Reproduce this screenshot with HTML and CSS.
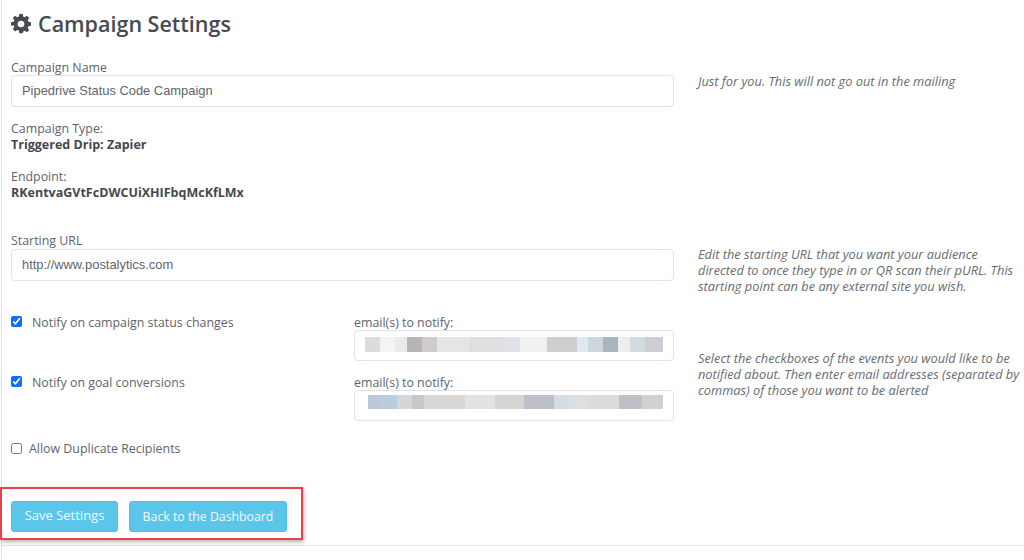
FILE: index.html
```html
<!DOCTYPE html>
<html lang="en">
<head>
<meta charset="utf-8">
<title>Campaign Settings</title>
<link rel="stylesheet" href="styles.css">
</head>
<body>
<main class="page">
  <h1 class="title">
    <svg class="gear" viewBox="0 0 24 24" aria-hidden="true"><path fill-rule="evenodd" d="M10 1h4l.6 3.1 1.9.8L19.100 3.100 21.900 5.900 20.100 8.500l.8 1.900L24 11v4l-3.100.6-.8 1.900 1.800 2.600-2.800 2.800-2.600-1.800-1.900.8L14 24h-4l-.6-3.100-1.900-.8-2.600 1.800-2.800-2.800 1.800-2.600-.8-1.900L0 15v-4l3.100-.6.800-1.900L2.100 5.900 4.900 3.100 7.500 4.900l1.900-.8zM12 9a4 4 0 1 0 0 8 4 4 0 0 0 0-8z" transform="translate(0 -1)"/></svg>
    Campaign Settings
  </h1>

  <section class="row row-name">
    <div class="main">
      <label class="label">Campaign Name</label>
      <input class="field" type="text" value="Pipedrive Status Code Campaign">
    </div>
    <p class="note">Just for you. This will not go out in the mailing</p>
  </section>

  <section class="info">
    <div class="label">Campaign Type:</div>
    <div class="value">Triggered Drip: Zapier</div>
  </section>
  <section class="info">
    <div class="label">Endpoint:</div>
    <div class="value">RKentvaGVtFcDWCUiXHIFbqMcKfLMx</div>
  </section>

  <section class="row row-url">
    <div class="main">
      <label class="label">Starting URL</label>
      <input class="field" type="text" value="http://www.postalytics.com">
    </div>
    <p class="note">Edit the starting URL that you want your audience directed to once they type in or QR scan their pURL. This starting point can be any external site you wish.</p>
  </section>

  <section class="row row-notify">
    <div class="main notify-list">
      <div class="notify">
        <label class="check"><input type="checkbox" checked><span>Notify on campaign status changes</span></label>
        <div class="email">
          <div class="label">email(s) to notify:</div>
          <div class="field masked"><span class="blur blur-a"></span></div>
        </div>
      </div>
      <div class="notify">
        <label class="check"><input type="checkbox" checked><span>Notify on goal conversions</span></label>
        <div class="email">
          <div class="label">email(s) to notify:</div>
          <div class="field masked"><span class="blur blur-b"></span></div>
        </div>
      </div>
    </div>
    <p class="note note-notify">Select the checkboxes of the events you would like to be notified about. Then enter email addresses (separated by commas) of those you want to be alerted</p>
  </section>

  <label class="check check-dup"><input type="checkbox"><span>Allow Duplicate Recipients</span></label>

  <div class="actions">
    <button class="btn btn-save" type="button">Save Settings</button>
    <button class="btn btn-back" type="button">Back to the Dashboard</button>
  </div>
  <hr class="rule">
  <div class="highlight"></div>
</main>
</body>
</html>
```
FILE: styles.css
```css
* { box-sizing: border-box; }
html, body { margin: 0; height: 100%; background: #fff; overflow: hidden; }
body {
  font-family: "Open Sans", "Noto Sans", sans-serif;
  font-size: 12.4px;
  line-height: 16px;
  color: #5f6468;
}
.page {
  position: relative;
  height: 560px;
  margin-left: 1px;
  padding: 10px 0 0 9px;
  border-left: 1px solid #e2e2e2;
}
.title {
  display: flex;
  align-items: center;
  gap: 7px;
  margin: 0;
  height: 28px;
  font-size: 21.5px;
  font-weight: 600;
  line-height: 28px;
  color: #464b50;
}
.gear { width: 20px; height: 20px; fill: #464b50; }
.row { display: grid; grid-template-columns: 663px 324px; column-gap: 24px; }
.row-name { margin-top: 22px; }
.label { height: 16px; }
.field {
  display: block;
  width: 100%;
  height: 32px;
  margin: 0;
  padding: 0 10px 2px;
  border: 1px solid #dfe2e6;
  border-radius: 4px;
  background: #fff;
  font-family: "Liberation Sans", sans-serif;
  font-size: 12.9px;
  color: #5f6468;
}
.row-name .field { margin-top: -1px; }
.note { margin: 13px 0 0; font-style: italic; font-size: 12.8px; color: #686c70; }
.info { margin-top: 14px; }
.info + .info { margin-top: 16px; }
.value { font-weight: 700; font-size: 12.5px; color: #44484c; }
.row-url { margin-top: 32px; }
.row-notify { margin-top: 13px; }
.notify { display: grid; grid-template-columns: 343px 320px; height: 60px; }
.check { display: flex; align-items: center; height: 16px; margin-top: 8px; }
.notify .check input { margin: -3px 10px 0 0; }
.check input { width: 11px; height: 11px; margin: -2px 7px 0 0; accent-color: #0d6efd; }
.email .label { margin-top: 8px; }
.masked { position: relative; height: 31px; margin-top: -1px; }
.blur {
  position: absolute;
  left: 10px;
  right: 10px;
  top: 6px;
  height: 15px;
  filter: blur(.6px);
}
.blur-a {
  background: linear-gradient(90deg,
    #dcdcdf 0 5%, #f4f5f3 5% 10%, #e9ebe8 10% 14%, #b5b5b8 14% 19%, #cfcbc8 19% 24%,
    #e4e6e6 24% 35%, #dfdfe1 35% 47%, #dfe2e6 47% 52%, #eff0f0 52% 61%, #cfcdd0 61% 71%,
    #e0e8ee 71% 75%, #ccd6df 75% 80%, #abb3bd 80% 85%, #eceef0 85% 89%, #d2dae2 89% 94%, #cdced4 94% 100%);
}
.blur-b {
  left: 13px;
  top: 4px;
  height: 14px;
  background: linear-gradient(90deg,
    #bcc9d9 0 4%, #b9cde0 4% 10%, #d4d7d7 10% 15%, #c8c8c8 15% 19%, #d9d6d4 19% 33%,
    #dfe3e6 33% 43%, #d7d5d4 43% 53%, #bdc0ca 53% 63%, #d5dce4 63% 68%, #dde0e0 68% 74%,
    #dcdcda 74% 85%, #bfc0c6 85% 93%, #cfd0d4 93% 100%);
}
.note-notify { margin-top: 43px; }
.check-dup { margin-top: 14px; }
.actions { display: flex; gap: 11px; margin-top: 44px; }
.btn {
  height: 31px;
  border: 1px solid #53bfe3;
  border-radius: 3px;
  background: #5bc5ea;
  color: #f2fbfe;
  font-family: inherit;
  font-size: 12.3px;
  padding: 0;
}
.btn-save { width: 107px; padding-bottom: 3px; font-size: 13px; }
.btn-back { width: 158px; }
.rule {
  position: absolute;
  left: 0;
  right: 0;
  top: 545px;
  margin: 0;
  border: 0;
  border-top: 1px solid #e6e6e6;
}
.highlight {
  position: absolute;
  left: -2px;
  top: 487px;
  width: 303px;
  height: 53px;
  border: 2px solid #e8434a;
  box-shadow: 1px 2px 4px rgba(0, 0, 0, .3);
  pointer-events: none;
}
```
